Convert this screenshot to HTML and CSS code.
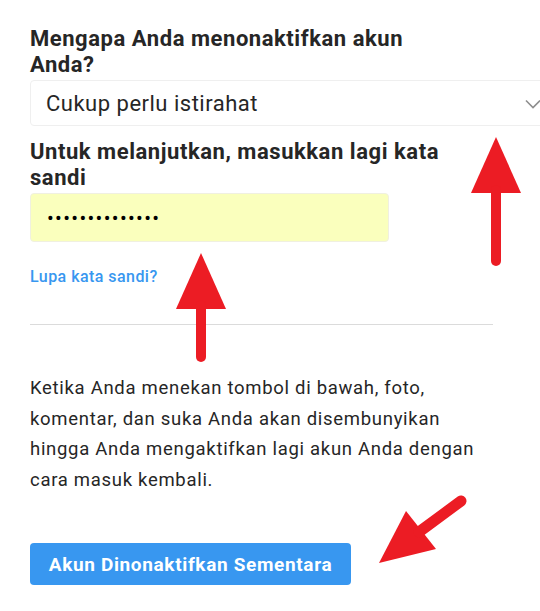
FILE: index.html
```html
<!DOCTYPE html>
<html>

<head>
    <title>Nonaktifkan Akun</title>
    <link rel="stylesheet" href="styles.css">
</head>

<body>
    <div class="page">
        <form class="deactivate">
            <h2 class="field-title">Mengapa Anda menonaktifkan akun Anda?</h2>
            <div class="select-box">
                <span>Cukup perlu istirahat</span>
                <svg class="chevron" width="16" height="10" viewBox="0 0 16 10">
                    <path d="M1 1.5 L8 8.5 L15 1.5" fill="none" stroke="#8e8e8e" stroke-width="1.6" />
                </svg>
            </div>

            <h2 class="field-title second">Untuk melanjutkan, masukkan lagi kata sandi</h2>
            <input class="password" type="password" value="rahasiaku2020x" />

            <a class="forgot" href="#">Lupa kata sandi?</a>

            <hr class="divider" />

            <p class="note">Ketika Anda menekan tombol di bawah, foto, komentar, dan suka Anda akan disembunyikan hingga Anda mengaktifkan lagi akun Anda dengan cara masuk kembali.</p>

            <button class="submit" type="button">Akun Dinonaktifkan Sementara</button>
        </form>

        <!-- red pointer arrows drawn on top -->
        <svg class="marks" width="540" height="611" viewBox="0 0 540 611">
            <g fill="#ec1c24" stroke="#ec1c24" stroke-linecap="round">
                <polygon points="496,137 521,193 471,193" stroke="none" />
                <line x1="496" y1="190" x2="496" y2="261" stroke-width="10" />

                <polygon points="201,253 226,309 176,309" stroke="none" />
                <line x1="201" y1="305" x2="201" y2="357" stroke-width="10" />

                <polygon points="379,563 406,511 436,549" stroke="none" />
                <line x1="419" y1="532" x2="461" y2="501" stroke-width="11" />
            </g>
        </svg>
    </div>
</body>

</html>
```

FILE: styles.css
```css
body {
    margin: 0;
    padding: 0;
    background-color: #ffffff;
    font-family: Roboto, "Liberation Sans", Arial, sans-serif;
    color: #262626;
    overflow: hidden;
}

.page {
    position: relative;
    width: 540px;
    height: 611px;
    overflow: hidden;
}

.deactivate {
    display: flex;
    flex-direction: column;
    align-items: flex-start;
    width: 463px;
    padding: 26px 0 0 30px;
}

.field-title {
    max-width: 430px;
    font-size: 22px;
    font-weight: 700;
    line-height: 26px;
    letter-spacing: 0.55px;
    margin: 0 0 2px 0;
}

.field-title.second {
    margin-top: 13px;
}

.select-box {
    display: flex;
    align-items: center;
    justify-content: space-between;
    box-sizing: border-box;
    width: 528px;
    height: 46px;
    padding: 0 16px 0 15px;
    border: 1px solid #efefef;
    border-radius: 4px;
    font-size: 22px;
    letter-spacing: 0.5px;
    flex-shrink: 0;
}

.chevron {
    margin-top: 2px;
}

.password {
    box-sizing: border-box;
    width: 359px;
    height: 49px;
    margin: 0;
    padding: 0 16px;
    border: 1px solid #f0f0e0;
    border-radius: 4px;
    background-color: #faffbd;
    font-family: Roboto, sans-serif;
    font-size: 20px;
    letter-spacing: 1.35px;
    color: #000;
    outline: none;
}

.forgot {
    margin-top: 25px;
    font-size: 16px;
    font-weight: 500;
    line-height: 20px;
    letter-spacing: 0.45px;
    color: #3897f0;
    text-decoration: none;
}

.divider {
    align-self: stretch;
    margin: 37px 0 0 0;
    border: none;
    border-top: 1px solid #dbdbdb;
}

.note {
    margin: 48px 0 0 0;
    font-size: 18.5px;
    line-height: 30.5px;
    letter-spacing: 0.7px;
}

.submit {
    margin-top: 48px;
    width: 321px;
    height: 42px;
    border: none;
    border-radius: 4px;
    background-color: #3897f0;
    color: #ffffff;
    font-family: Roboto, sans-serif;
    font-size: 19px;
    font-weight: 700;
    letter-spacing: 0.65px;
}

.marks {
    position: absolute;
    top: 0;
    left: 0;
    pointer-events: none;
}
```
